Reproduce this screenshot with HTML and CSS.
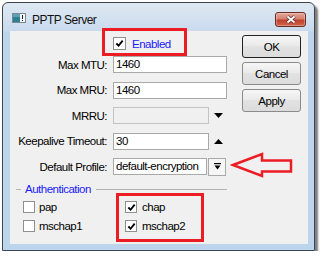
FILE: index.html
```html
<!DOCTYPE html>
<html lang="en">
<head>
  <meta charset="UTF-8">
  <title>PPTP Server</title>
  <link rel="stylesheet" href="styles.css">
</head>
<body>
  <div class="window">
    <div class="titlebar">
      <svg class="app-icon" viewBox="0 0 14 10" width="14" height="10">
        <rect x="0.5" y="0.5" width="13" height="9" fill="#f2f4f6" stroke="#7d8790"/>
        <rect x="1" y="1" width="7" height="8" fill="#2f7f92"/>
        <rect x="1" y="1" width="7" height="3" fill="#5aa3b6"/>
        <rect x="10" y="2" width="1" height="4" fill="#222"/>
        <rect x="10" y="7" width="1" height="1" fill="#222"/>
      </svg>
      <span class="title">PPTP Server</span>
      <span class="close">
        <svg viewBox="0 0 12 9" width="12" height="9">
          <path d="M2.5 1.5 L9.5 7.5 M9.5 1.5 L2.5 7.5" stroke="#5a2a24" stroke-width="3.6" fill="none"/>
          <path d="M2.5 1.5 L9.5 7.5 M9.5 1.5 L2.5 7.5" stroke="#fff" stroke-width="2" fill="none"/>
        </svg>
      </span>
    </div>

    <div class="frame">
      <div class="client">
        <div class="form">
          <div class="enabled">
            <span class="cb big">
              <svg viewBox="0 0 10 10" width="9" height="9"><path d="M1.5 5 L4 7.5 L8.5 1.8" stroke="#000" stroke-width="2" fill="none"/></svg>
            </span>
            <span>Enabled</span>
          </div>

          <div class="fields">
            <div class="row">
              <span class="lbl">Max MTU:</span>
              <span class="input w-long">1460</span>
            </div>
            <div class="row">
              <span class="lbl">Max MRU:</span>
              <span class="input w-long">1460</span>
            </div>
            <div class="row">
              <span class="lbl">MRRU:</span>
              <span class="input w-mid disabled"></span>
              <svg class="tri" viewBox="0 0 9 5" width="9" height="5"><polygon points="0,0 9,0 4.5,5" fill="#000"/></svg>
            </div>
            <div class="row">
              <span class="lbl">Keepalive Timeout:</span>
              <span class="input w-mid">30</span>
              <svg class="tri" viewBox="0 0 9 5" width="9" height="5"><polygon points="0,5 9,5 4.5,0" fill="#000"/></svg>
            </div>
            <div class="row">
              <span class="lbl">Default Profile:</span>
              <span class="input w-short">default-encryption</span>
              <span class="dd-btn">
                <svg viewBox="0 0 7 7" width="7" height="7"><rect x="0" y="0" width="7" height="1.2" fill="#000"/><polygon points="0.5,2.5 6.5,2.5 3.5,6.5" fill="#000"/></svg>
              </span>
            </div>
          </div>

          <div class="group-head"><span>Authentication</span></div>
          <div class="checks">
            <div class="check"><span class="cb"></span><span>pap</span></div>
            <div class="check on">
              <span class="cb"><svg viewBox="0 0 10 10" width="9" height="9"><path d="M1.5 5 L4 7.5 L8.5 1.8" stroke="#000" stroke-width="2" fill="none"/></svg></span>
              <span>chap</span>
            </div>
            <div class="check"><span class="cb"></span><span>mschap1</span></div>
            <div class="check on">
              <span class="cb"><svg viewBox="0 0 10 10" width="9" height="9"><path d="M1.5 5 L4 7.5 L8.5 1.8" stroke="#000" stroke-width="2" fill="none"/></svg></span>
              <span>mschap2</span>
            </div>
          </div>
        </div>

        <div class="buttons">
          <div class="btn default">OK</div>
          <div class="btn">Cancel</div>
          <div class="btn">Apply</div>
        </div>
      </div>
    </div>
  </div>

  <!-- red annotations drawn over the dialog -->
  <div class="mark mark-enabled"></div>
  <div class="mark mark-auth"></div>
  <svg class="arrow" viewBox="0 0 64 30" width="64" height="30">
    <polygon points="3,15 32,4 32,10.5 61,10.5 61,21.5 32,21.5 32,26" fill="none" stroke="#ec1c24" stroke-width="2.5"/>
  </svg>
</body>
</html>
```

FILE: styles.css
```css
body {
  margin: 0;
  background: #fff;
  font-family: "Liberation Sans", Arial, sans-serif;
  font-size: 11.5px;
  letter-spacing: -0.5px;
  color: #000;
}

.window {
  margin: 2px 0 0 2px;
  width: 313px;
  height: 249px;
  box-sizing: border-box;
  border: 1px solid #3c4650;
  border-radius: 6px 6px 0 0;
  background: linear-gradient(#dfe8f2, #c9daee 28px, #bcd4ec 29px);
  box-shadow: 3px 3px 2px rgba(0, 0, 0, 0.5);
  display: flex;
  flex-direction: column;
}

.titlebar {
  height: 28px;
  box-sizing: border-box;
  padding: 9px 8px 4px 9px;
  display: flex;
  align-items: center;
}

.app-icon {
  margin-bottom: 3px;
  flex: none;
}

.title {
  margin-left: 6px;
  font-size: 12px;
  color: #111;
}

.close {
  margin-left: auto;
  width: 31px;
  height: 15px;
  box-sizing: border-box;
  border: 1px solid #6b2a22;
  border-radius: 3px;
  background: linear-gradient(#e4a698, #d6806f 45%, #c0412b 55%, #d0654c);
  box-shadow: inset 0 0 0 1px rgba(255, 255, 255, 0.3);
  display: flex;
  align-items: center;
  justify-content: center;
}

.frame {
  flex: 1;
  padding: 0 6px 6px 7px;
}

.client {
  height: 100%;
  background: #f0f0f0;
  display: flex;
}

.form {
  width: 217px;
  padding-top: 6px;
}

.enabled {
  margin-left: 103px;
  height: 13px;
  display: flex;
  align-items: center;
  gap: 6px;
  color: #1a1aff;
}

.fields {
  margin-top: 6px;
  display: flex;
  flex-direction: column;
  gap: 8.5px;
}

.row {
  height: 17px;
  display: flex;
  align-items: center;
}

.lbl {
  flex: none;
  width: 97px;
  margin-right: 6px;
  text-align: right;
}

.input {
  flex: none;
  height: 17px;
  box-sizing: border-box;
  border: 1px solid #a9a9a9;
  background: #fff;
  padding-left: 2px;
  line-height: 15px;
  white-space: nowrap;
  overflow: hidden;
}

.w-long { width: 114px; }
.w-mid { width: 96px; }
.w-short { width: 94px; }

.input.disabled {
  background: #f0f0f0;
  border-color: #c4c4c4;
}

.tri {
  margin-left: 5px;
  flex: none;
}

.dd-btn {
  flex: none;
  margin-left: 1px;
  width: 18px;
  height: 18px;
  box-sizing: border-box;
  border: 1px solid #a9a9a9;
  background: #f6f6f6;
  display: flex;
  align-items: center;
  justify-content: center;
}

.group-head {
  margin-top: 7px;
  height: 14px;
  display: flex;
  align-items: center;
  color: #1a1aff;
}

.group-head::before,
.group-head::after {
  content: "";
  border-top: 1px solid #b4b4b4;
}

.group-head::before {
  width: 5px;
  margin-left: 6px;
}

.group-head::after {
  flex: 1;
}

.group-head span {
  margin: 0 5px 0 4px;
}

.checks {
  margin-top: 5px;
  padding-left: 13px;
  display: grid;
  grid-template-columns: 102px auto;
  row-gap: 7px;
}

.check {
  height: 12px;
  display: flex;
  align-items: center;
  gap: 4px;
}

.check.on {
  gap: 5px;
}

.cb {
  flex: none;
  width: 12px;
  height: 12px;
  box-sizing: border-box;
  border: 1px solid #8e8f8f;
  background: #fff;
  display: flex;
  align-items: center;
  justify-content: center;
}

.cb.big {
  width: 13px;
  height: 13px;
}

.buttons {
  margin-left: 15px;
  padding-top: 4px;
  width: 59px;
  display: flex;
  flex-direction: column;
  gap: 4px;
}

.btn {
  height: 23px;
  box-sizing: border-box;
  border: 1px solid #8a8a8a;
  border-radius: 3px;
  background: linear-gradient(#f6f6f6, #e9e9e9 50%, #e2e2e2 50%, #dcdcdc);
  display: flex;
  align-items: center;
  justify-content: center;
}

.btn.default {
  border-color: #222;
}

.mark {
  position: absolute;
  box-sizing: border-box;
  border: 3px solid #ec1c24;
}

.mark-enabled {
  left: 102px;
  top: 28px;
  width: 85px;
  height: 28px;
}

.mark-auth {
  left: 116px;
  top: 193px;
  width: 88px;
  height: 49px;
}

.arrow {
  position: absolute;
  left: 230px;
  top: 150px;
}
```
